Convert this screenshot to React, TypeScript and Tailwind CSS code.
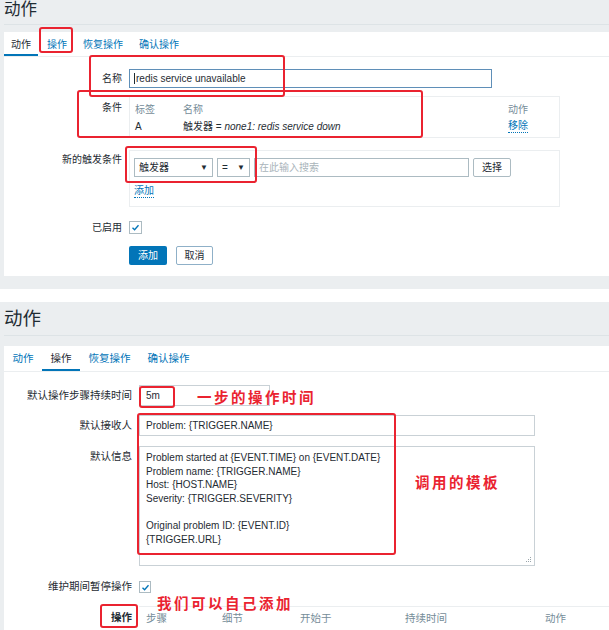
const Check = () => (
  <svg viewBox="0 0 12 12" className="h-[9px] w-[9px]">
    <path d="M2 6.2 L4.8 9 L10 3" fill="none" stroke="#0275b8" strokeWidth="1.8" />
  </svg>
)

const Select = ({ label, width }: { label: string; width: string }) => (
  <div
    className={`flex h-[19px] items-center justify-between border border-[#acbbc2] bg-white px-[4px] ${width}`}
  >
    <span>{label}</span>
    <span className="text-[8px] text-[#1f2c33]">▼</span>
  </div>
)

const RedBox = ({ className }: { className: string }) => (
  <div className={`pointer-events-none absolute rounded-[3px] border-2 border-[#ea2330] ${className}`} />
)

const Note = ({ text, className }: { text: string; className: string }) => (
  <div
    className={`absolute font-['Noto_Sans_CJK_SC',serif] text-[14.5px] font-semibold leading-none tracking-[2.5px] text-[#ea2330] ${className}`}
  >
    {text}
  </div>
)

export default function App() {
  return (
    <div className="relative h-[630px] w-[609px] overflow-hidden bg-white font-['Liberation_Sans','Noto_Sans_CJK_SC',sans-serif] text-[#1f2c33]">
      {/* first screenshot */}
      <section className="h-[289px] bg-[#ebeef0] pl-[4px]">
        <div className="h-[25px] border-b border-[#dde3e6] pt-[1px] text-[16.5px] leading-[17px] text-[#1f2c33]">
          动作
        </div>
        <div className="mt-[7px] h-[244px] bg-white text-[10px]">
          <div className="flex h-[25px] items-stretch border-b border-[#ebeef0]">
            <div className="flex items-center border-b-2 border-[#0275b8] px-[7px] pt-[2px]">动作</div>
            <div className="ml-[2px] flex items-center px-[7px] text-[#0275b8]">操作</div>
            <div className="ml-[2px] flex items-center px-[7px] text-[#0275b8]">恢复操作</div>
            <div className="ml-[2px] flex items-center px-[7px] text-[#0275b8]">确认操作</div>
          </div>

          <div className="grid grid-cols-[118px_431px] gap-x-[7px]">
            <div className="mt-[12px] flex h-[19px] items-center justify-end">名称</div>
            <div className="mt-[12px] flex h-[19px] w-[363px] items-center border border-[#5f8fb8] px-[4px]">
              <span className="mr-[1px] h-[11px] w-px bg-[#1f2c33]" />
              redis service unavailable
            </div>

            <div className="mt-[8px] pt-[4px] text-right">条件</div>
            <div className="mt-[8px] h-[42px] border border-[#ebeef0] px-[5px] pt-[4px]">
              <div className="flex h-[16px] items-center text-[#768d99]">
                <span className="w-[48px]">标签</span>
                <span className="w-[325px]">名称</span>
                <span>动作</span>
              </div>
              <div className="flex h-[18px] items-center">
                <span className="w-[48px]">A</span>
                <span className="w-[325px]">
                  触发器 = <i>none1: redis service down</i>
                </span>
                <span className="border-b border-dotted border-[#0275b8] leading-[12px] text-[#0275b8]">移除</span>
              </div>
            </div>

            <div className="mt-[12px] pt-[2px] text-right">新的触发条件</div>
            <div className="mt-[12px] h-[57px] border border-[#ebeef0] px-[4px] pt-[7px]">
              <div className="flex items-center gap-[4px]">
                <Select label="触发器" width="w-[79px]" />
                <Select label="=" width="w-[33px]" />
                <div className="flex h-[19px] w-[215px] items-center border border-[#acbbc2] px-[4px] text-[#a9b4ba]">
                  在此输入搜索
                </div>
                <div className="flex h-[19px] w-[38px] items-center justify-center rounded-[2px] border border-[#acbbc2] text-[#1f2c33]">
                  选择
                </div>
              </div>
              <div className="mt-[8px] inline-block border-b border-dotted border-[#0275b8] leading-[12px] text-[#0275b8]">
                添加
              </div>
            </div>

            <div className="mt-[14px] flex h-[13px] items-center justify-end">已启用</div>
            <div className="mt-[14px] flex h-[13px] w-[13px] items-center justify-center border border-[#acbbc2]">
              <Check />
            </div>

            <div />
            <div className="mt-[12px] flex gap-[9px]">
              <div className="flex h-[19px] w-[38px] items-center justify-center rounded-[2px] bg-[#0275b8] text-white">
                添加
              </div>
              <div className="flex h-[19px] w-[37px] items-center justify-center rounded-[2px] border border-[#8fb0c8] text-[#1f2c33]">
                取消
              </div>
            </div>
          </div>
        </div>
      </section>

      <div className="h-[13px]" />

      {/* second screenshot */}
      <section className="h-[328px] bg-[#ebeef0] pl-[4px]">
        <div className="h-[34px] border-b border-[#dde3e6] pt-[6px] text-[18.5px] leading-[22px]">动作</div>
        <div className="mt-[10px] h-[290px] bg-white text-[10.5px]">
          <div className="flex h-[26px] items-stretch border-b border-[#ebeef0]">
            <div className="flex items-center px-[8.5px] text-[#0275b8]">动作</div>
            <div className="flex items-center border-b-2 border-[#0275b8] px-[8.5px] pt-[2px]">操作</div>
            <div className="flex items-center px-[8.5px] text-[#0275b8]">恢复操作</div>
            <div className="flex items-center px-[8.5px] text-[#0275b8]">确认操作</div>
          </div>

          <div className="grid grid-cols-[128px_1fr] gap-x-[7px] text-[10.5px]">
            <div className="mt-[13px] flex h-[21px] items-center justify-end">默认操作步骤持续时间</div>
            <div className="mt-[13px] flex h-[21px] w-[131px] items-center border border-[#c9d1d6] px-[6px] text-[10px]">
              5m
            </div>

            <div className="mt-[9px] flex h-[21px] items-center justify-end">默认接收人</div>
            <div className="mt-[9px] flex h-[21px] w-[396px] items-center border border-[#c9d1d6] px-[6px] text-[10px]">
              Problem: {"{TRIGGER.NAME}"}
            </div>

            <div className="mt-[10px] pt-[3px] text-right">默认信息</div>
            <div className="relative mt-[10px] h-[120px] w-[396px] border border-[#c9d1d6] px-[6px] pt-[4px] text-[10px] leading-[13.6px]">
              <div>Problem started at {"{EVENT.TIME}"} on {"{EVENT.DATE}"}</div>
              <div>Problem name: {"{TRIGGER.NAME}"}</div>
              <div>Host: {"{HOST.NAME}"}</div>
              <div>Severity: {"{TRIGGER.SEVERITY}"}</div>
              <div className="h-[13.6px]" />
              <div>Original problem ID: {"{EVENT.ID}"}</div>
              <div>{"{TRIGGER.URL}"}</div>
              <svg viewBox="0 0 6 6" className="absolute right-[2px] bottom-[2px] h-[6px] w-[6px]">
                <rect x="4" y="0" width="1" height="1" fill="#9aa5ab" />
                <rect x="2" y="2" width="1" height="1" fill="#9aa5ab" />
                <rect x="4" y="2" width="1" height="1" fill="#9aa5ab" />
                <rect x="0" y="4" width="1" height="1" fill="#9aa5ab" />
                <rect x="2" y="4" width="1" height="1" fill="#9aa5ab" />
                <rect x="4" y="4" width="1" height="1" fill="#9aa5ab" />
              </svg>
            </div>

            <div className="mt-[15px] flex h-[12px] items-center justify-end">维护期间暂停操作</div>
            <div className="mt-[15px] flex h-[12px] w-[12px] items-center justify-center border border-[#acbbc2]">
              <Check />
            </div>

            <div className="mt-[13px] flex h-[24px] items-center justify-end font-bold">操作</div>
            <div className="mt-[13px] flex h-[24px] items-center border-t border-[#ebeef0] pl-[7px] text-[#768d99]">
              <span className="w-[76px]">步骤</span>
              <span className="w-[78px]">细节</span>
              <span className="w-[105px]">开始于</span>
              <span className="w-[140px]">持续时间</span>
              <span>动作</span>
            </div>
          </div>
        </div>
      </section>

      {/* annotations */}
      <RedBox className="left-[39px] top-[27px] h-[26px] w-[34px]" />
      <RedBox className="left-[89px] top-[55px] h-[42px] w-[196px]" />
      <RedBox className="left-[77px] top-[90px] h-[48px] w-[346px]" />
      <RedBox className="left-[125px] top-[146px] h-[37px] w-[132px]" />
      <RedBox className="left-[139px] top-[386px] h-[22px] w-[36px]" />
      <RedBox className="left-[137px] top-[413px] h-[142px] w-[259px]" />
      <RedBox className="left-[100px] top-[604px] h-[24px] w-[38px]" />
      <Note text="一步的操作时间" className="left-[197px] top-[390px]" />
      <Note text="调用的模板" className="left-[415px] top-[475px]" />
      <Note text="我们可以自己添加" className="left-[157px] top-[596px]" />
    </div>
  )
}
